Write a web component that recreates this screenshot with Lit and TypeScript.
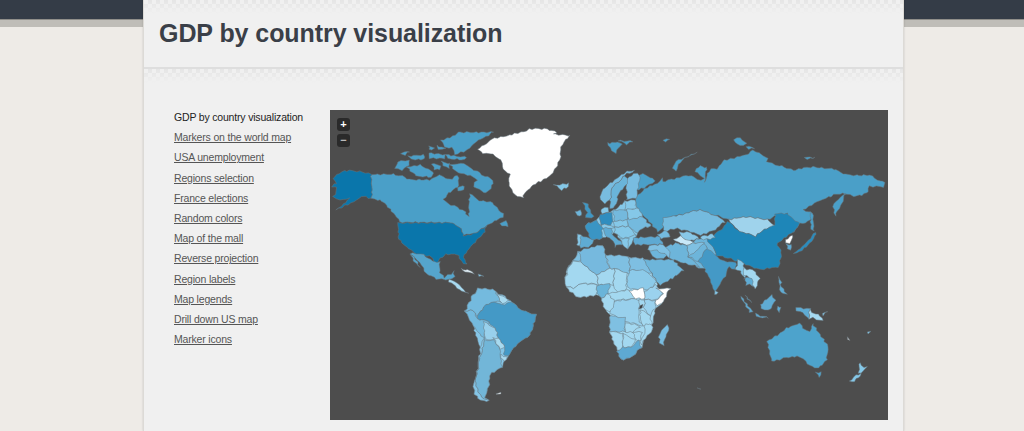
import { LitElement, css, html, svg } from "lit";
import { customElement } from "lit/decorators.js";

const LINKS = [
  "Markers on the world map",
  "USA unemployment",
  "Regions selection",
  "France elections",
  "Random colors",
  "Map of the mall",
  "Reverse projection",
  "Region labels",
  "Map legends",
  "Drill down US map",
  "Marker icons",
];

// shapes were traced from crops at 3x, each crop has its own origin
type Region = [fill: string, pts: string];
type Sheet = { x: number; y: number; regions: Region[] };

const SHEETS: Sheet[] = [
  // continent silhouettes go first, they close the gaps between countries
  {
    x: 560,
    y: 260,
    regions: [
      ["#a3d8f0", "15,62 20,25 45,-5 55,-25 130,-45 135,-15 205,-10 250,-5 275,40 290,65 290,85 330,85 310,125 285,145 278,195 275,215 255,235 245,260 225,285 190,300 180,300 172,272 160,245 150,215 150,165 135,150 125,115 110,105 70,110 50,110 30,95 20,80"],
    ],
  },
  {
    x: 430,
    y: 260,
    regions: [
      ["#85c5e6", "105,155 125,110 145,85 190,90 240,120 265,145 320,165 300,225 270,245 250,265 235,290 225,303 215,320 180,345 175,385 165,410 178,423 150,420 135,400 130,370 140,345 150,270 130,195"],
    ],
  },
  {
    x: 560,
    y: 170,
    regions: [
      ["#85c8e8", "75,165 110,150 125,135 160,122 195,95 230,90 250,140 275,170 245,175 235,190 230,195 205,235 190,225 165,190 130,205 100,210"],
    ],
  },
  {
    x: 600,
    y: 100,
    regions: [
      ["#6db5da", "225,430 260,435 300,415 345,412 340,440 350,465 345,480 320,510 290,500 265,470"],
    ],
  },
  {
    x: 330,
    y: 100,
    regions: [
      ["#ffffff", "443,148 470,130 480,118 510,110 565,100 600,88 650,85 680,97 670,103 722,108 700,125 692,150 690,180 675,210 650,235 610,255 585,275 578,296 555,285 535,250 540,225 520,205 515,180 480,160 460,160"],
      ["#0a76ab", "125,222 60,210 35,215 10,235 20,250 5,258 22,265 10,290 30,300 60,295 20,330 70,305 95,290 125,295"],
      ["#4a9fc8", "125,222 190,222 240,238 300,240 330,225 360,240 385,225 385,255 375,265 350,285 340,300 365,315 400,330 415,350 420,280 445,300 480,305 520,340 520,350 500,360 470,375 440,400 400,405 395,385 365,368 210,368 175,320 150,300 125,295"],
      ["#4a9fc8", "360,195 400,190 440,215 480,235 492,250 470,280 450,270 430,260 440,240 420,225 395,220 375,215"],
      ["#4a9fc8", "333,120 370,110 385,97 490,95 470,110 440,125 410,150 375,165 365,145 345,140"],
      ["#4a9fc8", "195,205 205,185 235,182 240,195 215,210"],
      ["#4a9fc8", "230,200 270,195 310,215 305,232 260,230"],
      ["#4a9fc8", "215,160 240,153 225,165"],
      ["#4a9fc8", "235,170 280,165 285,178 255,180"],
      ["#4a9fc8", "295,137 315,145 300,150"],
      ["#4a9fc8", "320,135 345,145 325,148"],
      ["#4a9fc8", "295,160 345,165 345,175 300,175"],
      ["#4a9fc8", "345,165 410,170 405,180 355,178"],
      ["#4a9fc8", "305,190 330,195 330,208 315,208"],
      ["#4a9fc8", "335,185 360,190 355,205 340,200"],
      ["#4a9fc8", "380,260 405,258 400,270 385,272"],
      ["#4a9fc8", "510,370 528,362 535,380 515,378"],
      ["#0a76ab", "205,368 365,368 395,385 400,408 440,400 470,378 465,395 440,420 425,440 400,465 410,495 400,490 385,465 345,462 320,490 300,470 255,460 230,440 205,420 205,395"],
      ["#85c8e8", "672,255 715,250 718,260 695,270"],
    ],
  },
  {
    x: 390,
    y: 220,
    regions: [
      ["#55a5cc", "60,100 100,103 130,125 150,125 150,160 165,172 190,155 195,170 175,180 140,178 110,160 95,135"],
      ["#55a5cc", "62,103 72,112 90,145 78,130"],
      ["#a8daf0", "175,180 195,182 215,205 235,218 215,215 195,195 178,188"],
      ["#e8f4fa", "212,148 235,150 255,160 235,158"],
      ["#85c8e8", "265,165 280,168 265,170"],
    ],
  },
  {
    x: 430,
    y: 260,
    regions: [
      ["#74bade", "105,155 125,110 145,85 190,90 215,125 195,125 170,135 150,155 140,170 130,150"],
      ["#a8daf0", "200,100 240,120 215,130"],
      ["#4499c6", "140,175 150,155 170,135 195,125 215,135 245,125 265,145 320,165 300,225 270,245 250,265 235,290 218,280 225,265 205,235 195,205 175,185"],
      ["#74bade", "105,155 130,150 140,175 175,185 160,235 130,195"],
      ["#98d0ec", "160,185 195,205 205,235 190,240 165,235"],
      ["#a8daf0", "190,235 205,235 225,265 210,265"],
      ["#a8daf0", "212,285 232,290 225,303 212,297"],
      ["#72b6d8", "165,240 190,240 210,265 210,285 215,320 180,345 175,385 165,410 170,420 150,405 135,370 150,290"],
      ["#85c5e6", "160,235 165,240 150,290 135,370 150,405 178,423 150,420 135,400 130,370 140,345 150,270"],
      ["#ffffff", "199,400 212,399 212,403 199,403"],
      ["#ffffff", "803,383 811,385 803,388"],
    ],
  },
  {
    x: 560,
    y: 260,
    regions: [
      ["#7fc0e2", "20,25 45,-5 55,-25 75,-25 65,0 40,5"],
      ["#a3d8f0", "15,62 25,25 40,5 60,5 110,45 115,75 95,70 60,70 40,85 20,80"],
      ["#76b9de", "55,-25 80,-35 130,-45 135,-15 145,15 150,25 110,45 60,5 65,-5"],
      ["#7fc0e2", "135,-15 165,-15 205,-10 210,30 210,45 165,25 150,25 145,10"],
      ["#7ebfe2", "205,-10 250,-5 275,40 210,30"],
      ["#8ccae9", "210,30 255,30 290,65 265,90 210,85 200,70"],
      ["#a3d8f0", "165,25 200,40 200,85 175,100 160,75"],
      ["#a3d8f0", "110,45 150,25 165,25 160,75 115,75"],
      ["#6ab4d9", "110,75 150,72 145,100 125,115 110,100"],
      ["#a3d8f0", "20,80 40,85 60,70 110,72 110,105 70,110 50,110 30,95"],
      ["#a3d8f0", "145,100 175,95 210,90 225,115 175,120 160,125"],
      ["#a3d8f0", "125,115 145,100 165,125 160,155 135,150"],
      ["#98d0ec", "165,125 225,115 240,125 235,180 250,200 220,190 195,185 150,160"],
      ["#ffffff", "208,92 250,85 255,115 225,115"],
      ["#9bd2ee", "255,95 285,75 310,100 285,120 255,120"],
      ["#ffffff", "290,85 330,85 310,125 288,138 285,122 312,100"],
      ["#9bd2ee", "255,120 285,122 285,145 270,165 250,145"],
      ["#a3d8f0", "238,120 255,120 250,145 240,145"],
      ["#a3d8f0", "240,148 270,165 278,195 250,200 240,180"],
      ["#3a3a3a", "240,136 247,136 247,146 240,146"],
      ["#7fc0e2", "150,165 195,175 195,215 150,215"],
      ["#a3d8f0", "195,190 225,192 240,200 220,215 195,218"],
      ["#a3d8f0", "255,190 278,195 275,215 255,235 245,255 240,240 255,220"],
      ["#a3d8f0", "150,215 190,220 185,270 172,272 160,245"],
      ["#a3d8f0", "190,222 225,240 215,262 188,262"],
      ["#a3d8f0", "220,215 245,215 240,240 225,240"],
      ["#5ea9d2", "172,275 188,262 215,262 235,238 245,260 225,285 190,300 180,300"],
      ["#78bce0", "320,195 326,205 310,255 298,250 298,220"],
      ["#6db5da", "250,0 340,0 360,25 370,30 345,50 300,75 290,65"],
    ],
  },
  {
    x: 600,
    y: 100,
    regions: [
      ["#4a9fc8", "107,300 120,280 135,265 175,250 185,235 190,245 240,232 265,225 300,240 310,235 285,215 300,195 315,205 320,200 315,245 330,205 350,205 375,180 440,165 460,150 505,175 500,185 580,210 640,200 710,210 720,220 760,225 810,225 855,250 850,262 810,258 800,280 760,290 735,280 700,285 650,305 610,330 640,340 625,365 600,372 580,395 570,375 560,340 530,345 500,360 440,350 385,360 345,345 300,330 255,340 195,355 190,380 175,395 160,380 130,345 108,320"],
      ["#4a9fc8", "110,225 130,222 160,235 165,245 140,258 135,265 110,270 105,250"],
      ["#4a9fc8", "215,205 235,180 290,158 255,172 235,195 230,212"],
      ["#4a9fc8", "400,118 420,113 440,130 420,138"],
      ["#4a9fc8", "440,140 462,145 445,148"],
      ["#4a9fc8", "612,170 648,172 625,178"],
      ["#4a9fc8", "190,120 210,118 195,125"],
      ["#4a9fc8", "22,130 55,125 65,135 45,158 30,145"],
      ["#4a9fc8", "55,123 98,125 80,132"],
      ["#4a9fc8", "630,340 640,340 640,395 632,390"],
      ["#4a9fc8", "700,310 738,280 725,310 705,350"],
      ["#74bade", "190,355 255,340 300,330 345,345 375,365 345,390 300,405 270,395 230,385 195,395 190,380"],
      ["#9fd3ec", "385,360 440,350 500,360 530,378 500,385 465,408 420,395"],
      ["#1e86b8", "318,420 350,400 385,365 420,395 465,408 500,385 525,375 525,340 560,340 600,372 575,400 555,415 530,430 545,460 535,500 480,510 430,490 400,480 350,465 340,440"],
      ["#ffffff", "555,420 578,405 572,430 558,430"],
      ["#5fabd3", "560,432 575,432 575,448 562,448"],
      ["#2a8cbe", "580,460 615,435 645,395 650,400 630,430 590,460"],
      ["#88c8e8", "240,395 270,398 300,415 265,425 240,408"],
      ["#c8e8f8", "222,420 240,408 285,430 260,435 225,425"],
      ["#88c8e8", "300,410 340,402 345,412 310,420"],
      ["#7fc0e2", "260,435 310,425 320,440 300,470 265,470"],
      ["#6db5da", "150,440 195,440 200,470 175,478 150,462"],
      ["#6db5da", "195,440 225,430 260,435 265,470 300,500 250,490 200,470"],
    ],
  },
  {
    x: 560,
    y: 170,
    regions: [
      ["#3f97c4", "70,97 82,105 100,140 75,145 82,125"],
      ["#6db5da", "48,125 62,120 65,135 50,138"],
      ["#3a95c4", "75,165 110,150 130,170 125,190 130,205 100,210 90,205"],
      ["#5fabd3", "52,193 90,205 105,210 85,232 62,232"],
      ["#85c8e8", "52,195 62,195 60,228 52,225"],
      ["#85c8e8", "110,150 125,135 120,155 125,165 112,160"],
      ["#2f8dbf", "120,135 155,125 160,155 150,165 125,165 120,155"],
      ["#85c8e8", "125,165 150,165 165,175 135,178 125,170"],
      ["#5fabd3", "130,175 155,175 155,190 190,225 170,225 165,235 160,215 135,195"],
      ["#74b9dd", "160,122 200,120 205,150 165,155"],
      ["#85c8e8", "160,155 205,150 205,170 165,172"],
      ["#85c8e8", "165,172 205,170 230,195 190,205 165,190"],
      ["#74bade", "200,145 250,140 275,170 245,175 235,190 205,170"],
      ["#85c8e8", "200,118 235,115 250,140 205,148"],
      ["#85c8e8", "195,95 225,90 230,115 195,118"],
      ["#78bce0", "195,35 220,10 240,15 235,50 230,85 200,90 200,65"],
      ["#6ab4d9", "150,90 155,55 195,15 205,30 195,50 175,70 170,100 160,115 150,115"],
      ["#78bce0", "118,90 125,65 155,35 200,5 225,3 195,15 155,55 150,90 135,100"],
      ["#85c8e8", "125,115 145,110 145,125 125,130"],
      ["#85c8e8", "180,205 205,205 205,235 190,230"],
      ["#5ea9d2", "218,205 300,200 310,222 225,225"],
      ["#7fc0e2", "265,225 310,222 330,245 330,262 290,240 265,240"],
      ["#74bade", "290,195 320,180 330,200 305,205"],
    ],
  },
  {
    x: 680,
    y: 220,
    regions: [
      ["#6db5da", "25,110 75,70 80,85 60,125 45,120"],
      ["#4499c6", "55,125 80,85 105,105 130,125 170,125 165,150 145,140 140,160 105,215 85,170 70,140"],
      ["#85c8e8", "105,212 112,215 110,225 105,225"],
      ["#85c8e8", "165,150 175,120 190,130 190,145 200,165 195,178 180,150"],
      ["#a3d8f0", "190,145 220,150 240,175 225,205 215,195 205,170 190,165"],
      ["#5fabd3", "195,172 215,175 220,200 210,195 200,195"],
      ["#5fabd3", "180,232 190,235 220,275 210,275"],
      ["#5fabd3", "225,280 265,295 230,290"],
      ["#5fabd3", "240,255 275,225 285,240 270,270 245,268"],
      ["#5fabd3", "195,225 215,250 208,245"],
      ["#5fabd3", "290,260 305,262 295,280"],
      ["#5fabd3", "295,170 305,190 300,195 320,225 300,215"],
    ],
  },
  {
    x: 690,
    y: 260,
    regions: [
      ["#5fabd3", "315,140 360,148 358,175 345,165 320,150"],
      ["#a5daf2", "360,150 385,165 400,183 370,175 358,175"],
      ["#4da3cc", "233,245 290,205 330,190 340,205 360,215 368,190 390,225 415,260 410,300 385,325 360,318 340,295 320,288 280,295 245,305 240,280"],
      ["#4da3cc", "378,338 395,338 388,352"],
      ["#85c8e8", "510,305 520,320 532,322 515,340 505,338"],
      ["#85c8e8", "515,340 495,365 480,365 490,350"],
      ["#85c8e8", "398,160 412,155 400,165"],
      ["#dddddd", "470,232 480,238 472,240"],
      ["#85c8e8", "530,218 542,212 535,222"],
    ],
  },
];

// coastlines wobble with the position, so that shared borders stay shared
function wobble(x: number, y: number): [number, number] {
  const dx = Math.sin(y * 0.9 + x * 0.31) * 0.7 + Math.sin(y * 2.3 - x * 1.1) * 0.4;
  const dy = Math.sin(x * 0.8 - y * 0.37) * 0.7 + Math.sin(x * 2.1 + y * 1.3) * 0.4;
  return [x + dx, y + dy];
}

function outline(sheet: Sheet, pts: string) {
  const corners = pts.split(" ").map((pair) => {
    const [x, y] = pair.split(",").map(Number);
    return [sheet.x + x / 3, sheet.y + y / 3];
  });
  const out: string[] = [];
  corners.forEach((from, i) => {
    const to = corners[(i + 1) % corners.length];
    const steps = Math.max(1, Math.round(Math.hypot(to[0] - from[0], to[1] - from[1]) / 3));
    for (let s = 0; s < steps; s++) {
      const [x, y] = wobble(
        from[0] + ((to[0] - from[0]) * s) / steps,
        from[1] + ((to[1] - from[1]) * s) / steps,
      );
      out.push(`${x.toFixed(1)},${y.toFixed(1)}`);
    }
  });
  return out.join(" ");
}

@customElement("app-root")
export class AppRoot extends LitElement {
  static styles = css`
    :host {
      display: block;
      height: 431px;
      overflow: hidden;
      background: linear-gradient(#343c47 0 19px, #8f8e8a 19px 20px, #bfbdb8 20px 27px, #eeebe7 27px);
      font-family: "Liberation Sans", Arial, sans-serif;
    }

    .panel {
      box-sizing: border-box;
      width: 761px;
      height: 431px;
      margin-left: 143px;
      background-color: #f0f0f0;
      border-left: 1px solid #dcdad6;
      border-right: 1px solid #dcdad6;
      box-shadow: 0 0 2px rgba(0, 0, 0, 0.15);
    }

    .title {
      box-sizing: border-box;
      display: flex;
      align-items: center;
      height: 69px;
      padding: 0 0 2px 15px;
      border-bottom: 2px solid #dedede;
      background:
        linear-gradient(rgba(240, 240, 240, 0), #f0f0f0 14px) no-repeat,
        repeating-conic-gradient(#e5e5e5 0 25%, #f0f0f0 0 50%) 0 0 / 8px 8px;
    }

    h1 {
      margin: 0;
      font-size: 25px;
      line-height: 30px;
      font-weight: 700;
      letter-spacing: -0.07px;
      color: #3a3f48;
    }

    .content {
      display: flex;
      padding: 41px 15px 0 30px;
      background:
        linear-gradient(rgba(240, 240, 240, 0), #f0f0f0 14px) no-repeat,
        repeating-conic-gradient(#e5e5e5 0 25%, #f0f0f0 0 50%) 0 0 / 8px 8px;
    }

    nav {
      display: flex;
      flex-direction: column;
      flex: none;
      width: 156px;
      margin-top: -3px;
      font-size: 10.5px;
      line-height: 20.2px;
      letter-spacing: -0.18px;
    }

    nav span {
      color: #222;
    }

    nav a {
      color: #555;
      text-decoration: underline;
    }

    .map {
      position: relative;
      flex: none;
      width: 558px;
      height: 310px;
      background-color: #4d4d4d;
    }

    .map svg {
      display: block;
    }

    .zoom {
      position: absolute;
      top: 8px;
      left: 7px;
      display: flex;
      flex-direction: column;
      gap: 3px;
    }

    .zoom span {
      width: 13px;
      height: 13px;
      border-radius: 3px;
      background-color: #2a2a2a;
      color: #fff;
      font-size: 11px;
      font-weight: 700;
      line-height: 12px;
      text-align: center;
    }

    .zoom span + span {
      color: #bbb;
    }
  `;

  renderRegion(sheet: Sheet, region: Region) {
    return svg`<polygon points=${outline(sheet, region[1])} fill=${region[0]} stroke="#66757c" stroke-width="0.5" stroke-linejoin="round"></polygon>`;
  }

  render() {
    return html`<div class="panel">
      <div class="title"><h1>GDP by country visualization</h1></div>
      <div class="content">
        <nav>
          <span>GDP by country visualization</span>
          ${LINKS.map((link) => html`<a href="#">${link}</a>`)}
        </nav>
        <div class="map">
          <svg width="558" height="310" viewBox="330 110 558 310">
            ${SHEETS.map((sheet) => sheet.regions.map((region) => this.renderRegion(sheet, region)))}
          </svg>
          <div class="zoom"><span>+</span><span>−</span></div>
        </div>
      </div>
    </div>`;
  }
}
